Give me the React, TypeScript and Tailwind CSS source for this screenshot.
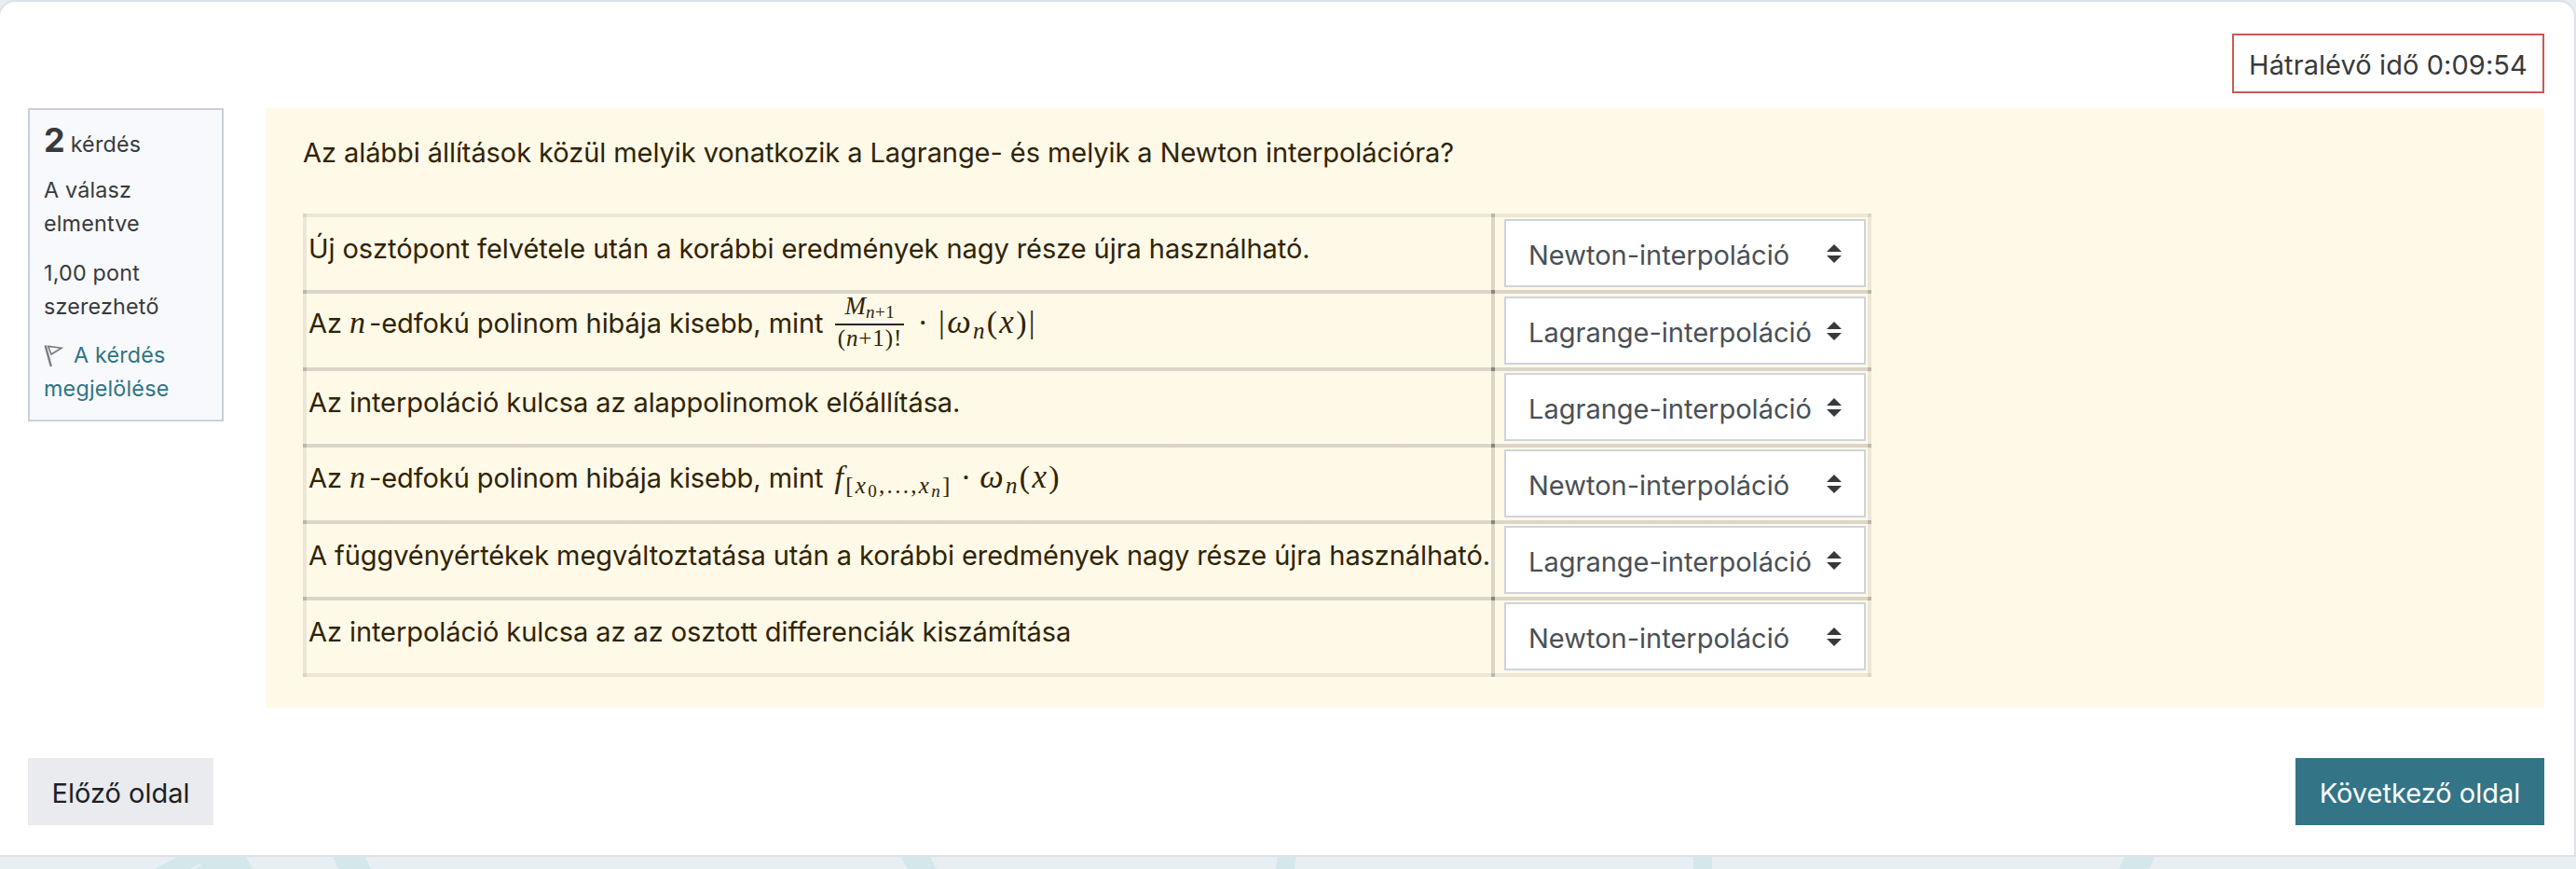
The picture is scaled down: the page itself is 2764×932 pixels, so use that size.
import React from "react";

type Choice = "Newton-interpoláció" | "Lagrange-interpoláció";

const serif = "font-['Liberation_Serif',serif]";

function Lead() {
  return (
    <span>
      Az <i className={`${serif} text-[34px] leading-[0]`}>n</i>
      <span className="ml-[4px]">-edfokú polinom hibája kisebb, mint</span>
    </span>
  );
}

function Flag() {
  return (
    <svg className="mr-[11px] inline-block h-[24px] w-[21px] align-[-5px]" viewBox="0 0 21 24" fill="none" stroke="#7b7b7b">
      <path d="M1.6 0.5 L7.8 23" strokeWidth="2.4" />
      <path d="M4.6 1.4 L19 3.2 L8 10 Z" strokeWidth="1.6" />
    </svg>
  );
}

function Select({ value }: { value: Choice }) {
  return (
    <button className="flex h-[73px] w-[388px] items-center justify-between border-2 border-[#ced4da] bg-white pr-[24px] pl-[24px] text-left text-[#495057]">
      <span className="pt-[3px] tracking-normal whitespace-nowrap">{value}</span>
      <svg className="h-[20px] w-[16px] shrink-0" viewBox="0 0 16 20" fill="#37393b">
        <path d="M8 0 L16 8 H0 Z M0 12 H16 L8 20 Z" />
      </svg>
    </button>
  );
}

const cellBorder =
  "bg-[linear-gradient(#00000013,#00000013),linear-gradient(#00000013,#00000013),linear-gradient(#00000013,#00000013),linear-gradient(#00000013,#00000013)] bg-no-repeat [background-size:4px_100%,4px_100%,100%_4px,100%_4px] [background-position:left,right,top,bottom]";

const rows: { text: React.ReactNode; value: Choice; h: string; pad: string; selectPad: string }[] = [
  {
    text: "Új osztópont felvétele után a korábbi eredmények nagy része újra használható.",
    value: "Newton-interpoláció",
    h: "h-[86px]",
    pad: "pt-[15px]",
    selectPad: "pt-[6px]",
  },
  {
    text: (
      <span className="flex items-baseline">
        <Lead />
        <span className={`${serif} ml-[13px] flex w-[74px] flex-col items-center self-start text-[25px] tracking-normal`}>
          <span className="flex h-[25px] w-full items-start justify-center border-b-2 border-[#2f2404]">
            <i className="text-[27px] leading-[9px]">M</i>
            <span className="text-[19px] leading-[22px] tracking-[0.6px]"><i>n</i>+1</span>
          </span>
          <span className="h-[27px] leading-[27px] tracking-[0.9px]">(<i>n</i>+1)!</span>
        </span>
        <span className={`${serif} ml-[14px] text-[34px] leading-[43px] tracking-[2.3px]`}>
          ·<span className="ml-[9px]">|</span><i className="text-[36px] leading-[0]">ω</i><sub className="bottom-[-6px] text-[25px]"><i>n</i></sub>(<i className="text-[35px] leading-[0]">x</i>)|
        </span>
      </span>
    ),
    value: "Lagrange-interpoláció",
    h: "h-[87px]",
    pad: "pt-[13px]",
    selectPad: "pt-[7px]",
  },
  {
    text: "Az interpoláció kulcsa az alappolinomok előállítása.",
    value: "Lagrange-interpoláció",
    h: "h-[86px]",
    pad: "pt-[15px]",
    selectPad: "pt-[6px]",
  },
  {
    text: (
      <span className="flex items-baseline">
        <Lead />
        <span className={`${serif} ml-[12px] text-[34px] leading-[43px] tracking-[2.3px]`}>
          <i>f</i>
          <sub className="bottom-[-6px] text-[25px]">[<i>x</i><sub className="bottom-[-4px] text-[19px]">0</sub>,...,<i>x</i><sub className="bottom-[-4px] text-[19px]"><i>n</i></sub>]</sub>
          <span className="mr-[7px] ml-[9px]">·</span><i className="text-[36px] leading-[0]">ω</i><sub className="bottom-[-6px] text-[25px]"><i>n</i></sub>(<i className="text-[35px] leading-[0]">x</i>)
        </span>
      </span>
    ),
    value: "Newton-interpoláció",
    h: "h-[86px]",
    pad: "pt-[14px]",
    selectPad: "pt-[6px]",
  },
  {
    text: "A függvényértékek megváltoztatása után a korábbi eredmények nagy része újra használható.",
    value: "Lagrange-interpoláció",
    h: "h-[86px]",
    pad: "pt-[15px]",
    selectPad: "pt-[6px]",
  },
  {
    text: "Az interpoláció kulcsa az az osztott differenciák kiszámítása",
    value: "Newton-interpoláció",
    h: "h-[86px]",
    pad: "pt-[15px]",
    selectPad: "pt-[6px]",
  },
];

export default function App() {
  return (
    <div className="relative h-[932px] w-[2764px] overflow-hidden bg-[#e7eff2] font-['Inter',sans-serif] text-[29px] leading-[45px] text-[#373a3c]">
      <svg className="absolute bottom-0 left-0 h-[15px] w-full" viewBox="0 0 2764 15" fill="#d4e8eb">
        <path d="M194 0 H263 L271 15 H208 L217 10 L212 10 L204 15 H166 Z M356 0 H391 L398 15 H363 Z M965 0 H997 L1005 15 H974 Z M1371 0 H1391 L1389 15 H1369 Z M1817 0 H1837 V15 H1817 Z M2281 0 H2313 L2306 15 H2273 Z" />
      </svg>
      <main className="relative -ml-[2px] flex h-[919px] w-[2766px] flex-col rounded-t-[18px] border-2 border-[#dee2e6] bg-white pr-[32px] pl-[30px]">
        <div className="mt-[34px] flex justify-end">
          <div className="flex h-[64px] w-[335px] items-center justify-center border-2 border-[#ca5a54] pt-[3px] tracking-[0.08px] whitespace-nowrap">Hátralévő idő 0:09:54</div>
        </div>
        <div className="mt-[16px] flex items-start justify-between">
          <aside className="h-[336px] w-[210px] border-2 border-[#cad0d7] bg-[#f8f9fc] px-[15px] pt-[8px] text-[23.3px] leading-[36px] tracking-[0.2px]">
            <h3 className="h-[50px] leading-[48px] whitespace-nowrap"><b className="text-[36px]">2</b><span className="-ml-[1px]"> kérdés</span></h3>
            <p className="mt-[10px]">A válasz<br />elmentve</p>
            <p className="mt-[17px]">1,00 pont<br />szerezhető</p>
            <p className="mt-[16px] text-[#2f7484]"><Flag />A kérdés<br />megjelölése</p>
          </aside>
          <section className="h-[643px] w-[2445px] bg-[#fff9e8] px-[40px] pt-[25px] tracking-[-0.07px] text-[#2f2404]">
            <p className="whitespace-nowrap">Az alábbi állítások közül melyik vonatkozik a Lagrange- és melyik a Newton interpolációra?</p>
            <div className="mt-[43px] flex flex-col">
              {rows.map((r, i) => (
                <div key={i} className={`-mb-[4px] flex ${r.h}`}>
                  <div className={`${cellBorder} w-[1279px] pl-[6px] whitespace-nowrap ${r.pad}`}>{r.text}</div>
                  <div className={`${cellBorder} -ml-[4px] w-[408px] pl-[14px] ${r.selectPad}`}><Select value={r.value} /></div>
                </div>
              ))}
            </div>
          </section>
        </div>
        <div className="mt-[54px] flex justify-between">
          <button className="h-[72px] w-[199px] bg-[#e9ebef] pt-[2px] text-[#1d2125]">Előző oldal</button>
          <button className="h-[72px] w-[267px] bg-[#337486] pt-[2px] text-white">Következő oldal</button>
        </div>
      </main>
    </div>
  );
}
